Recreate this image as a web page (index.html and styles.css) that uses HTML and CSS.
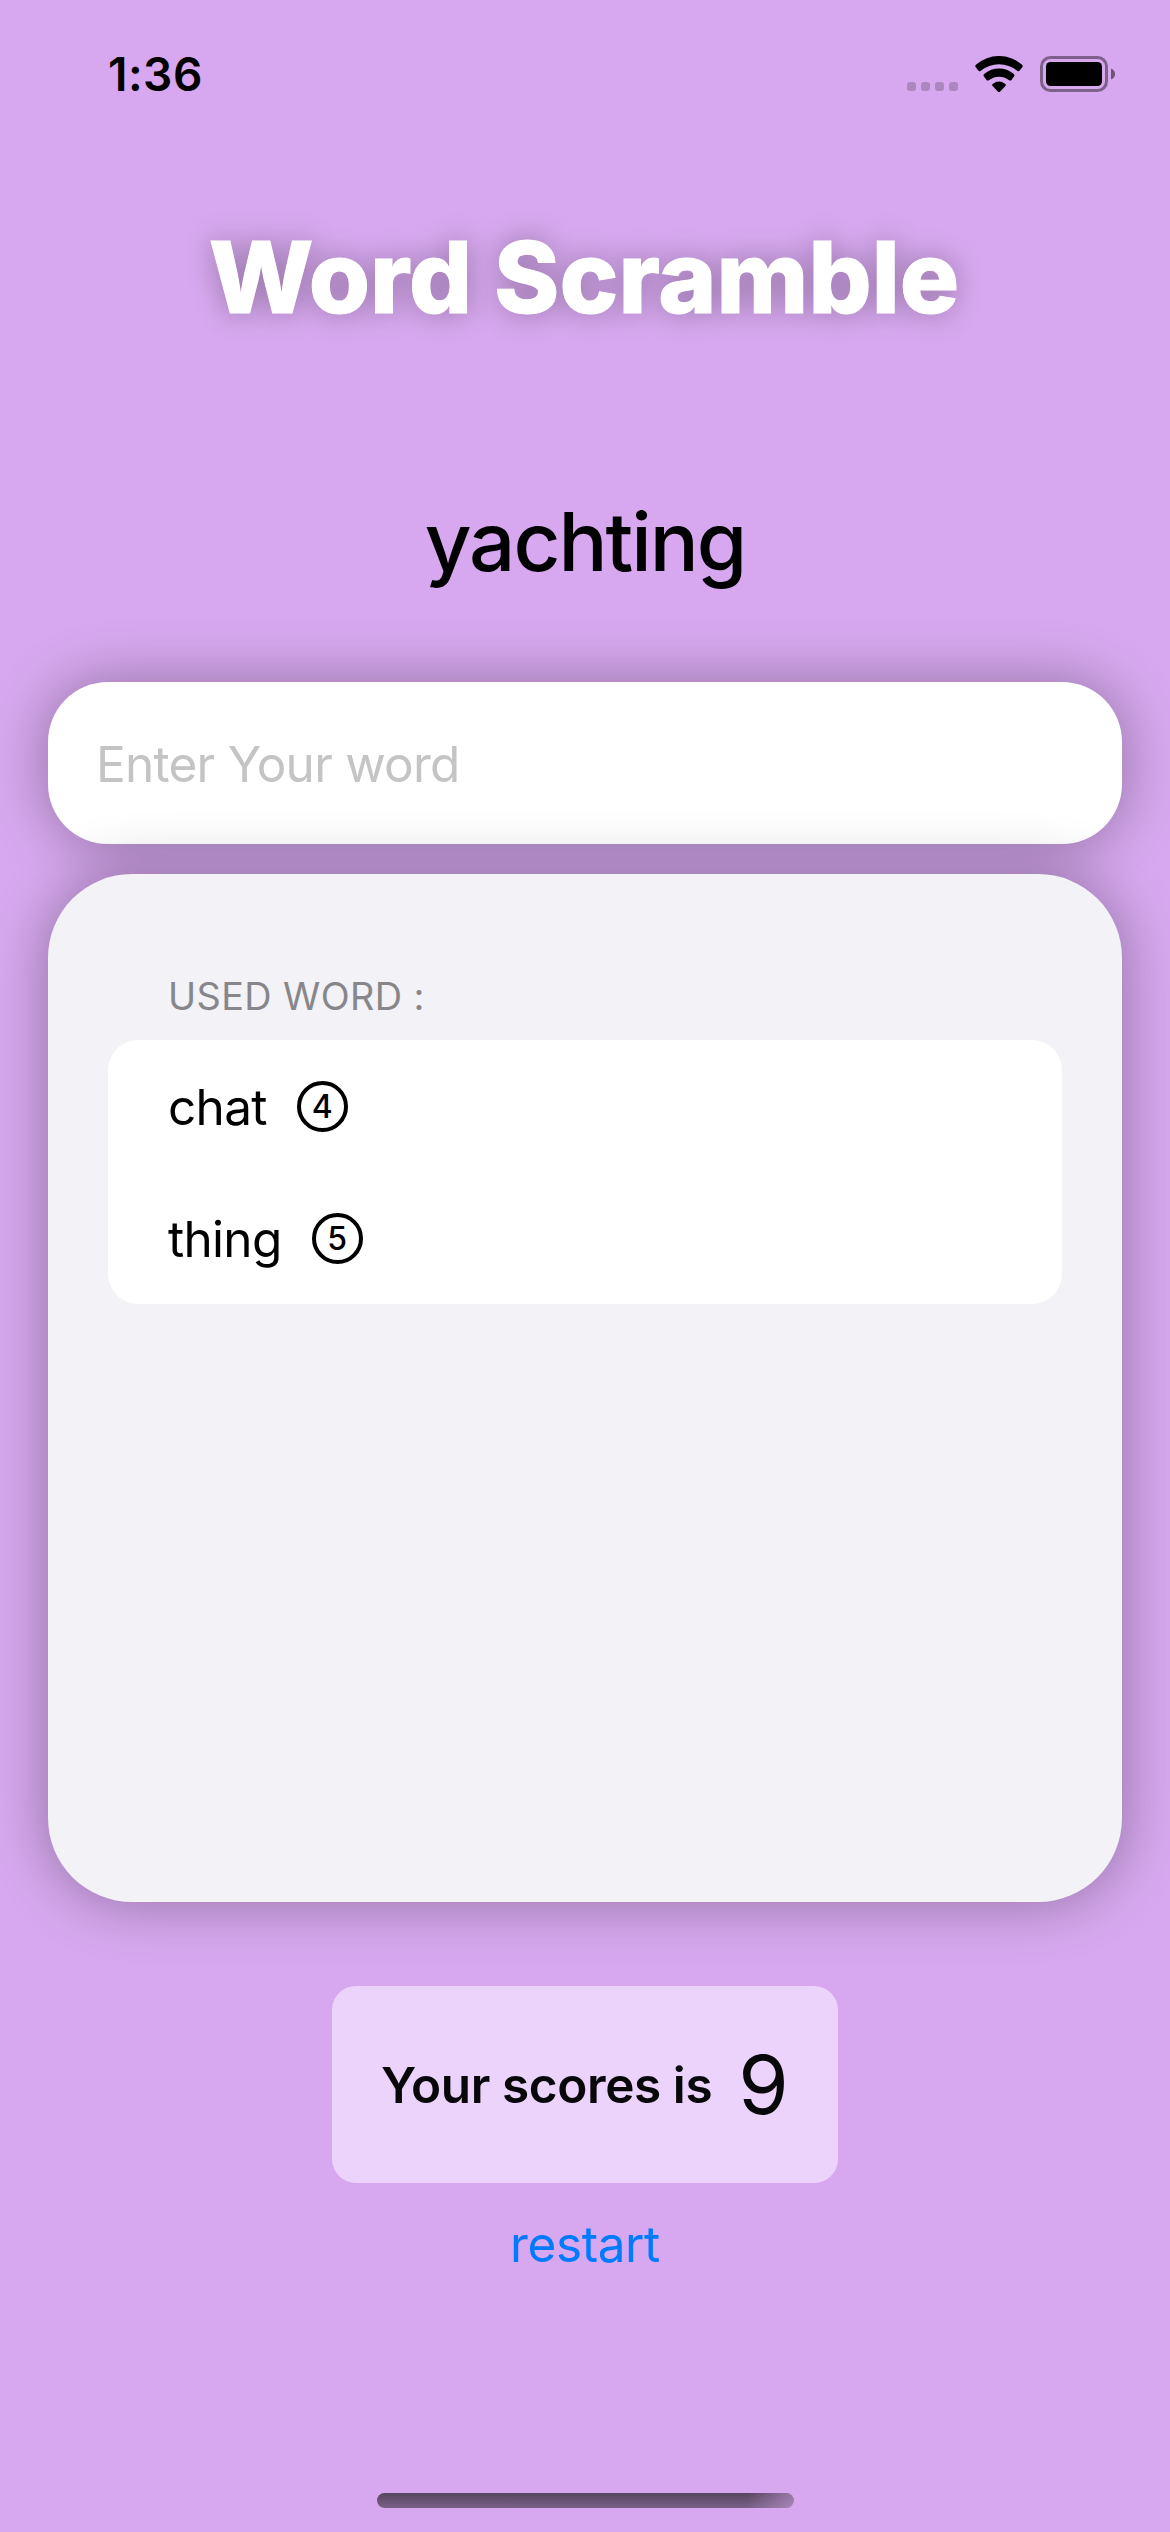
FILE: index.html
```html
<!DOCTYPE html>
<html lang="en">
<head>
<meta charset="utf-8">
<title>Word Scramble</title>
<link rel="stylesheet" href="styles.css">
</head>
<body>
<main class="screen">
  <header class="status">
    <span class="time">1:36</span>
    <div class="indicators">
      <div class="signal"><i></i><i></i><i></i><i></i></div>
      <svg class="wifi" width="48" height="37" viewBox="0 0 48 37"><path d="M1 11.6Q-.5 10 1.2 8.6A34.5 34.5 0 0 1 46.800 8.600Q48.500 10 47 11.600L44.700 14.600Q43.600 16 42.200 14.700A28.500 28.500 0 0 0 5.800 14.700Q4.400 16 3.300 14.600ZM9 20.600Q7.800 19 9.500 17.700A22.500 22.500 0 0 1 38.500 17.700Q40.200 19 39 20.600L36.500 23.900Q35.300 25.200 33.800 24A16 16 0 0 0 14.200 24Q12.700 25.200 11.500 23.900ZM17.400 29.800Q16.700 28.600 18 27.700A10.500 10.500 0 0 1 30 27.700Q31.300 28.600 30.600 29.800L25.200 35.400Q24 36.600 22.800 35.400Z"/></svg>
      <svg class="battery" width="75" height="36" viewBox="0 0 75 36"><rect x="1.500" y="1.500" width="65" height="33" rx="9" fill="none" stroke="#000" stroke-width="3" opacity=".42"/><rect x="6" y="6" width="56" height="24" rx="4.500"/><path d="M71 12.500Q75 14 75 18Q75 22 71 23.500Z" opacity=".5"/></svg>
    </div>
  </header>
  <h1 class="title">Word Scramble</h1>
  <p class="word">yachting</p>
  <div class="field">Enter Your word</div>
  <section class="panel">
    <h2 class="caption">USED WORD :</h2>
    <ul class="list">
      <li><span>chat</span><b class="count">4</b></li>
      <li><span>thing</span><b class="count">5</b></li>
    </ul>
  </section>
  <div class="score"><span class="label">Your scores is</span><span class="points">9</span></div>
  <button class="restart">restart</button>
  <div class="home"></div>
</main>
</body>
</html>
```
FILE: styles.css
```css
* { box-sizing: border-box; margin: 0; padding: 0; }
body { background: #d7a8ef; font-family: Inter, "Liberation Sans", sans-serif; color: #000; }
.screen { width: 1170px; height: 2532px; display: flex; flex-direction: column; align-items: center; overflow: hidden; background: #d7a8ef; }
.status { width: 100%; height: 148px; flex: none; display: flex; justify-content: space-between; align-items: center; padding: 0 55px 0 108px; }
.time { font-size: 46px; font-weight: 600; line-height: 56px; letter-spacing: .5px; }
.indicators { display: flex; align-items: center; }
.signal { display: flex; gap: 5px; margin: 25px 17px 0 0; }
.signal i { width: 9px; height: 9px; border-radius: 3px; background: rgba(0,0,0,.2); }
.wifi { margin-right: 17px; }
.title { height: 260px; padding: 69px 2px 0 0; font-size: 99px; line-height: 120px; font-weight: 800; letter-spacing: .1px; -webkit-text-stroke: 1px #fff; color: #fff; text-shadow: 0 0 30px rgba(0,0,0,.33); }
.word { height: 274px; padding-top: 84px; font-size: 81.500px; line-height: 100px; font-weight: 500; letter-spacing: -2px; }
.field { width: 1074px; height: 162px; flex: none; display: flex; align-items: center; padding: 2px 48px 0; border-radius: 60px; background: #fff; color: #c4c4c6; font-size: 49.500px; letter-spacing: -.75px; box-shadow: 0 0 60px rgba(0,0,0,.33); }
.panel { width: 1074px; height: 1028px; flex: none; margin-top: 30px; padding: 98px 60px 0; border-radius: 84px; background: #f2f2f7; box-shadow: 0 0 60px rgba(0,0,0,.33); }
.caption { height: 68px; padding-left: 60px; font-size: 37.800px; line-height: 48px; font-weight: 400; letter-spacing: .4px; color: #87868b; }
.list { list-style: none; border-radius: 30px; background: #fff; }
.list li { height: 132px; display: flex; align-items: center; padding-left: 60px; gap: 30px; font-size: 49.500px; letter-spacing: -.7px; }
.list span { padding-top: 2px; }
.count { width: 51px; height: 51px; display: flex; align-items: center; justify-content: center; border: 4px solid #000; border-radius: 50%; font-size: 32px; font-weight: 550; letter-spacing: 0; }
.score { width: 506px; height: 197px; flex: none; margin-top: 84px; display: flex; align-items: center; padding-left: 49px; gap: 26px; border-radius: 24px; background: #ecd3fb; color: #08080a; }
.label { font-size: 49.500px; font-weight: 600; letter-spacing: -.4px; }
.points { font-size: 81.500px; }
.restart { margin-top: 31px; border: 0; background: none; color: #007aff; font: 49.500px/60px Inter, "Liberation Sans", sans-serif; letter-spacing: -.4px; }
.home { width: 417px; height: 15px; margin: auto 0 24px; border-radius: 8px; background: linear-gradient(90deg, rgba(215,168,239,0) 89%, rgba(215,168,239,.5)), linear-gradient(#57465f, #7a6287); }
```
